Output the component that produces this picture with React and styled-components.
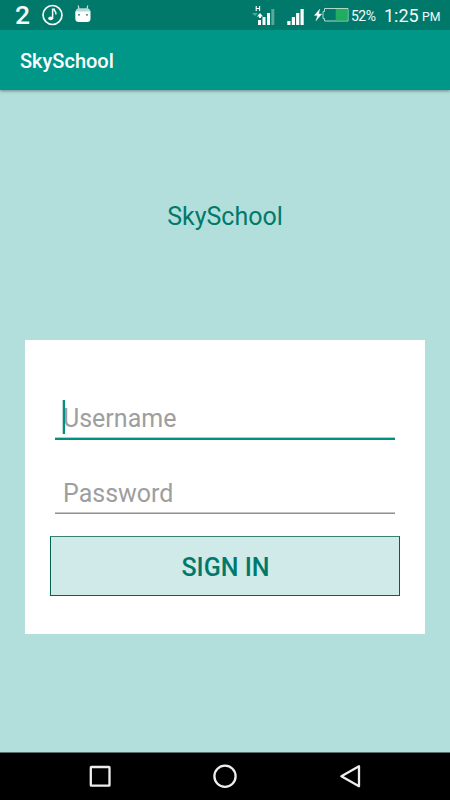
import React from "react";
import styled, { createGlobalStyle } from "styled-components";

const Global = createGlobalStyle`
  * { box-sizing: border-box; }
  body { margin: 0; background: #b2dfdb; font-family: Roboto, sans-serif; }
`;

const Screen = styled.div`
  width: 450px;
  height: 800px;
  display: flex;
  flex-direction: column;
  background: #b2dfdb;
  overflow: hidden;
`;

const StatusBar = styled.div`
  height: 30px;
  flex: none;
  display: flex;
  justify-content: space-between;
  background: #00796b;
  color: #f4faf9;
  white-space: nowrap;
`;

const StatusGroup = styled.div`
  display: flex;
`;

const StatusText = styled.span`
  display: block;
  width: ${(p) => p.$width}px;
  font-size: ${(p) => p.$size}px;
  font-weight: ${(p) => p.$weight || 400};
  line-height: ${(p) => p.$line || 32}px;
  letter-spacing: ${(p) => p.$tracking || 0}px;
  margin-left: ${(p) => p.$gap || 0}px;
`;

const StatusIcon = styled.svg`
  display: block;
  height: 30px;
  width: ${(p) => p.$width}px;
  margin-left: ${(p) => p.$gap || 0}px;
  flex: none;
`;

const AppBar = styled.header`
  height: 60px;
  flex: none;
  padding: 2px 0 0 20px;
  display: flex;
  align-items: center;
  background: #009688;
  box-shadow: 0 1px 3px rgba(0, 0, 0, 0.4);
  clip-path: inset(0 0 -8px 0);
  z-index: 1;
`;

const AppTitle = styled.h1`
  margin: 0;
  color: #fff;
  font-size: 20px;
  line-height: 24px;
  font-weight: 500;
`;

const Content = styled.main`
  flex: 1;
  display: flex;
  flex-direction: column;
  align-items: center;
`;

const Brand = styled.h2`
  height: 30px;
  margin: 112px 0 108px;
  color: #00796b;
  font-size: 25px;
  line-height: 30px;
  font-weight: 400;
`;

const Card = styled.form`
  width: 400px;
  height: 293.5px;
  padding: 60px 25px 0;
  display: flex;
  flex-direction: column;
  background: #fff;
`;

const Field = styled.label`
  position: relative;
  height: ${(p) => p.$height}px;
  margin: 0 5px ${(p) => p.$after}px;
`;

const Underline = styled.span`
  display: block;
  margin-top: 1px;
  height: ${(p) => (p.$active ? 3 : 2)}px;
  background: ${(p) => (p.$active
    ? "linear-gradient(#a8d3cd 0 1px, #009080 1px)"
    : "linear-gradient(#c4c4c4 0 1px, #929292 1px)")};
`;

const Input = styled.input`
  display: block;
  width: 100%;
  height: 36px;
  padding: 0 8px;
  border: 0;
  outline: 0;
  background: transparent;
  font: 400 25px/30px Roboto, sans-serif;
  &::placeholder { color: #9e9e9e; opacity: 1; }
`;

const Caret = styled.span`
  position: absolute;
  left: 7px;
  top: 0;
  width: 3px;
  height: 33.5px;
  border-left: 1px solid #b9dcd7;
  background: #009080;
`;

const SignIn = styled.button`
  height: 60px;
  padding: 4px 0 0 1px;
  border: 1px solid #006450;
  border-top-color: #3a7f72;
  background: #d0eae9;
  color: #00796b;
  font: 500 25px/30px Roboto, sans-serif;
`;

const NavBar = styled.nav`
  height: 48px;
  flex: none;
  display: flex;
  justify-content: space-between;
  padding: 0 87px;
  background: #000;
  border-top: 1px solid #59706e;
`;

const NavIcon = styled.svg`
  display: block;
  width: 26px;
  height: 47px;
  fill: none;
  stroke: #eee;
  stroke-width: 2.3;
  stroke-linejoin: round;
`;

export default function App() {
  return (
    <Screen>
      <Global />
      <StatusBar>
        <StatusGroup>
          <StatusText $gap={15} $width={15} $size={26.5} $weight={500} $line={30}>2</StatusText>
          <StatusIcon $gap={12} $width={21} viewBox="0 0 21 30" fill="none" stroke="#f4faf9">
            <circle cx="10.5" cy="15" r="9.5" strokeWidth="1.7" />
            <ellipse cx="8.7" cy="18.3" rx="2.5" ry="1.9" fill="#f4faf9" stroke="none" />
            <path d="M10.6 18.3V9.3H12.2C12 11.3 15 11.4 13.7 14.5" strokeWidth="1.5" />
          </StatusIcon>
          <StatusIcon $gap={12} $width={16} viewBox="0 0 16 30">
            <path d="M3.2 5.5 4.3 10M12.8 5.5 11.7 10" stroke="#cde5e1" strokeWidth="1.1" />
            <path d="M.5 12Q1 8.3 4 8.3H12Q15 8.3 15.5 12Z" fill="#b6d9d4" />
            <path d="M.3 11.5H15.5V18.5Q15.5 22 12 22H4Q.3 22 .3 18.5Z" fill="#fff" />
            <circle cx="4" cy="14.8" r=".9" fill="#00796b" />
            <circle cx="12" cy="14.8" r=".9" fill="#00796b" />
          </StatusIcon>
        </StatusGroup>
        <StatusGroup>
          <StatusIcon $width={23} viewBox="0 0 23 30" fill="#fff">
            <path d="M4.2 6V11M7.6 6V11M4.2 8.5H7.6" stroke="#fff" strokeWidth="1.1" fill="none" />
            <path d="M0 13H6L3 16Z" fill="#56a398" />
            <path d="M5 16.5 8 13 11 16.5H9V18H7V16.5Z" />
            <path d="M6 20H9V25H6ZM10.5 17H13.5V25H10.5ZM15 13H18V25H15Z" />
            <path d="M19.3 9H22.3V25H19.3Z" fill="#5ba79c" />
          </StatusIcon>
          <StatusIcon $gap={12} $width={17} viewBox="0 0 17 30" fill="#fff">
            <path d="M.3 21H3.5V25H.3ZM4.8 17H8V25H4.8ZM9.1 13H12.3V25H9.1ZM13.5 9H16.7V25H13.5Z" />
          </StatusIcon>
          <StatusIcon $gap={10} $width={35} viewBox="0 0 35 30">
            <path d="M5.8 9 .3 15.5H3.5L1.8 21 7.8 14H4.7Z" fill="#fff" stroke="#fff" strokeWidth=".3" />
            <path d="M10.5 8.5H34V21H10.5V18.5H9V11.5H10.5Z" fill="none" stroke="#b0dac8" />
            <path d="M21.7 9H33.5V20.5H21.7Z" fill="#20ad60" />
          </StatusIcon>
          <StatusText $gap={2} $width={25} $size={14} $tracking={-0.5}>52%</StatusText>
          <StatusText $gap={8} $width={36} $size={18}>1:25</StatusText>
          <StatusText $gap={2} $width={28} $size={12.3} $line={35}>PM</StatusText>
        </StatusGroup>
      </StatusBar>
      <AppBar>
        <AppTitle>SkySchool</AppTitle>
      </AppBar>
      <Content>
        <Brand>SkySchool</Brand>
        <Card>
          <Field $height={40} $after={35}>
            <Input type="text" placeholder="Username" aria-label="Username" />
            <Caret />
            <Underline $active />
          </Field>
          <Field $height={39} $after={22}>
            <Input type="password" placeholder="Password" aria-label="Password" />
            <Underline />
          </Field>
          <SignIn type="button">SIGN IN</SignIn>
        </Card>
      </Content>
      <NavBar>
        <NavIcon viewBox="0 0 26 47">
          <rect x="3.8" y="14" width="18.7" height="18.7" rx=".5" />
        </NavIcon>
        <NavIcon viewBox="0 0 26 47">
          <circle cx="13" cy="23.3" r="10.6" />
        </NavIcon>
        <NavIcon viewBox="0 0 26 47">
          <path d="M22 13.3V33.3L4.4 23.3Z" />
        </NavIcon>
      </NavBar>
    </Screen>
  );
}
